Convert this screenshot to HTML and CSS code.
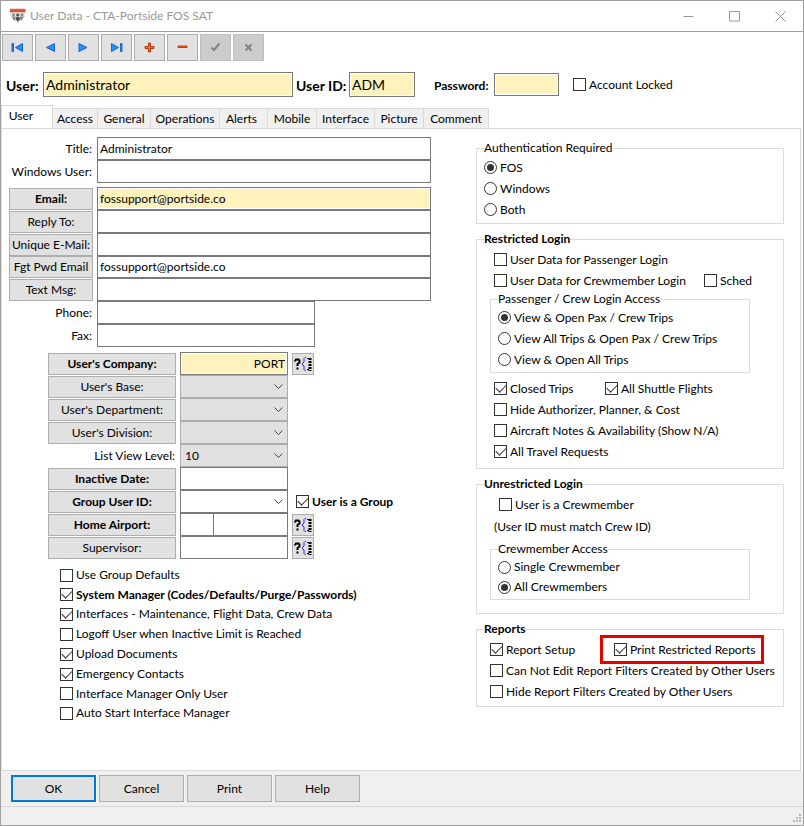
FILE: index.html
```html
<!DOCTYPE html>
<html lang="en">
<head>
<meta charset="utf-8">
<title>User Data - CTA-Portside FOS SAT</title>
<link rel="stylesheet" href="styles.css">
</head>
<body>
<div class="window">
  <header class="titlebar">
    <svg class="app-icon" width="18" height="16" viewBox="0 0 18 16" aria-hidden="true">
      <path d="M1 1h15.500v3.500H1z" fill="#d9532c"/>
      <path d="M1 1h15.500" stroke="#ee8a66" stroke-dasharray="2 1"/>
      <path d="M1.500 4.500h14.500v4.500H1.500z" fill="#e2e2e2"/>
      <g fill="#8a8a8a"><circle cx="4.500" cy="6.800" r="1.500"/><circle cx="13" cy="6.800" r="1.500"/><path d="M2.500 8.500h4v2.500l-1 2-1.500-2z M11 8.500h4l-1.500 2.500-1.500 2-1-2z"/></g>
      <g fill="#505050"><circle cx="8.800" cy="7" r="1.600"/><path d="M6.800 9h4v4l-1-1-.9 3-1-3-1.100 1z"/></g>
    </svg>
    <h1>User Data - CTA-Portside FOS SAT</h1>
    <div class="window-controls">
      <button type="button" aria-label="Minimize"><svg width="11" height="11" viewBox="0 0 11 11"><path d="M.5 5.500h10"/></svg></button>
      <button type="button" aria-label="Maximize"><svg width="11" height="11" viewBox="0 0 11 11"><path d="M1 .5h9.500v9.500H.5V.5z"/></svg></button>
      <button type="button" aria-label="Close"><svg width="11" height="11" viewBox="0 0 11 11"><path d="M.5.5l10 10M10.500.5l-10 10"/></svg></button>
    </div>
  </header>

  <div class="toolbar">
    <button type="button" aria-label="First"><svg class="blue" width="13" height="11" viewBox="0 0 13 11"><path d="M1 1.500h1.500v8H1z M11.500 1.500v8L4.500 5.500z"/></svg></button>
    <button type="button" aria-label="Previous"><svg class="blue" width="13" height="11" viewBox="0 0 13 11"><path d="M10.500 1.500v8L2.500 5.500z"/></svg></button>
    <button type="button" aria-label="Next"><svg class="blue" width="13" height="11" viewBox="0 0 13 11"><path d="M2 1.500v8l8-4z"/></svg></button>
    <button type="button" aria-label="Last"><svg class="blue" width="13" height="11" viewBox="0 0 13 11"><path d="M1.500 1.500v8l7-4z M10.500 1.500H12v8h-1.500z"/></svg></button>
    <button type="button" aria-label="Add"><svg class="orange" width="13" height="11" viewBox="0 0 13 11"><path d="M5.500 1h2v3.500H11v2H7.500V10h-2V6.500H2v-2h3.500z"/></svg></button>
    <button type="button" aria-label="Delete"><svg class="orange" width="13" height="11" viewBox="0 0 13 11"><path d="M2 4h9v1.500H2z"/></svg></button>
    <button type="button" aria-label="Save" disabled><svg class="gray" width="13" height="11" viewBox="0 0 13 11"><path d="M2.500 5.500l2.500 2.500 5.500-6.500"/></svg></button>
    <button type="button" aria-label="Discard" disabled><svg class="gray" width="13" height="11" viewBox="0 0 13 11"><path d="M3.500 2.500l6 6M9.500 2.500l-6 6"/></svg></button>
  </div>

  <div class="identity">
    <label class="big" for="user">User:</label>
    <input class="user required big-input" id="user" type="text" value="Administrator">
    <label class="big" for="userid">User ID:</label>
    <input class="userid required big-input" id="userid" type="text" value="ADM">
    <label class="password-label" for="password">Password:</label>
    <input class="password required" id="password" type="password">
    <label class="check locked"><input type="checkbox">Account Locked</label>
  </div>

  <nav class="tabs">
    <button type="button" class="active">User</button>
    <button type="button">Access</button>
    <button type="button">General</button>
    <button type="button">Operations</button>
    <button type="button" class="alerts">Alerts</button>
    <button type="button">Mobile</button>
    <button type="button">Interface</button>
    <button type="button">Picture</button>
    <button type="button">Comment</button>
  </nav>

  <main class="pane">
    <div class="left">
      <div class="contact">
        <label for="title">Title:</label><input id="title" type="text" value="Administrator">
        <label for="winuser">Windows User:</label><input id="winuser" type="text">
      </div>
      <div class="contact">
        <button type="button" class="strong">Email:</button><input class="required" aria-label="Email" type="text" value="fossupport@portside.co">
        <button type="button">Reply To:</button><input aria-label="Reply To" type="text">
        <button type="button">Unique E-Mail:</button><input aria-label="Unique E-Mail" type="text">
        <button type="button">Fgt Pwd Email</button><input class="tight" aria-label="Forgot Password Email" type="text" value="fossupport@portside.co">
        <button type="button">Text Msg:</button><input aria-label="Text Msg" type="text">
        <label for="phone">Phone:</label><input class="short" id="phone" type="text">
        <label for="fax">Fax:</label><input class="short" id="fax" type="text">
      </div>

      <div class="details">
        <button type="button" class="strong">User's Company:</button>
        <input class="required right-text" aria-label="User's Company" type="text" value="PORT">
        <button type="button" class="lookup" aria-label="Look up company"><svg width="18" height="16" viewBox="0 0 18 16"><use href="#lookup"/></svg></button>

        <button type="button">User's Base:</button>
        <span class="combo off"><select aria-label="User's Base"><option></option></select><svg width="9" height="6" viewBox="0 0 9 6"><path d="M.5.5l4 4 4-4"/></svg></span>
        <span></span>
        <button type="button">User's Department:</button>
        <span class="combo off"><select aria-label="User's Department"><option></option></select><svg width="9" height="6" viewBox="0 0 9 6"><path d="M.5.5l4 4 4-4"/></svg></span>
        <span></span>
        <button type="button">User's Division:</button>
        <span class="combo off"><select aria-label="User's Division"><option></option></select><svg width="9" height="6" viewBox="0 0 9 6"><path d="M.5.5l4 4 4-4"/></svg></span>
        <span></span>
        <label for="level">List View Level:</label>
        <span class="combo off"><select id="level"><option>10</option></select><svg width="9" height="6" viewBox="0 0 9 6"><path d="M.5.5l4 4 4-4"/></svg></span>
        <span></span>
        <button type="button" class="strong">Inactive Date:</button>
        <input aria-label="Inactive Date" type="text">
        <span></span>
        <button type="button" class="strong">Group User ID:</button>
        <span class="combo"><select aria-label="Group User ID"><option></option></select><svg width="9" height="6" viewBox="0 0 9 6"><path d="M.5.5l4 4 4-4"/></svg></span>
        <label class="check strong group"><input type="checkbox" checked>User is a Group</label>
        <button type="button" class="strong">Home Airport:</button>
        <span class="split"><input aria-label="Country" type="text"><input aria-label="Airport" type="text"></span>
        <button type="button" class="lookup" aria-label="Look up airport"><svg width="18" height="16" viewBox="0 0 18 16"><use href="#lookup"/></svg></button>
        <button type="button">Supervisor:</button>
        <input aria-label="Supervisor" type="text">
        <button type="button" class="lookup" aria-label="Look up supervisor"><svg width="18" height="16" viewBox="0 0 18 16"><use href="#lookup"/></svg></button>
      </div>

      <div class="options">
        <label class="check"><input type="checkbox">Use Group Defaults</label>
        <label class="check strong"><input type="checkbox" checked>System Manager (Codes/Defaults/Purge/Passwords)</label>
        <label class="check"><input type="checkbox" checked>Interfaces - Maintenance, Flight Data, Crew Data</label>
        <label class="check"><input type="checkbox">Logoff User when Inactive Limit is Reached</label>
        <label class="check"><input type="checkbox" checked>Upload Documents</label>
        <label class="check"><input type="checkbox" checked>Emergency Contacts</label>
        <label class="check"><input type="checkbox">Interface Manager Only User</label>
        <label class="check"><input type="checkbox">Auto Start Interface Manager</label>
      </div>
    </div>

    <div class="right">
      <fieldset class="auth">
        <legend>Authentication Required</legend>
        <label class="check"><input type="radio" name="auth" checked>FOS</label>
        <label class="check"><input type="radio" name="auth">Windows</label>
        <label class="check"><input type="radio" name="auth">Both</label>
      </fieldset>

      <fieldset class="restricted">
        <legend class="strong">Restricted Login</legend>
        <label class="check"><input type="checkbox">User Data for Passenger Login</label>
        <div class="pair sched">
          <label class="check"><input type="checkbox">User Data for Crewmember Login</label>
          <label class="check"><input type="checkbox">Sched</label>
        </div>
        <fieldset class="inner">
          <legend>Passenger / Crew Login Access</legend>
          <label class="check"><input type="radio" name="pax" checked>View &amp; Open Pax / Crew Trips</label>
          <label class="check"><input type="radio" name="pax">View All Trips &amp; Open Pax / Crew Trips</label>
          <label class="check"><input type="radio" name="pax">View &amp; Open All Trips</label>
        </fieldset>
        <div class="pair shuttle">
          <label class="check"><input type="checkbox" checked>Closed Trips</label>
          <label class="check"><input type="checkbox" checked>All Shuttle Flights</label>
        </div>
        <label class="check"><input type="checkbox">Hide Authorizer, Planner, &amp; Cost</label>
        <label class="check"><input type="checkbox">Aircraft Notes &amp; Availability (Show N/A)</label>
        <label class="check"><input type="checkbox" checked>All Travel Requests</label>
      </fieldset>

      <fieldset class="unrestricted">
        <legend class="strong">Unrestricted Login</legend>
        <label class="check crew"><input type="checkbox">User is a Crewmember</label>
        <p>(User ID must match Crew ID)</p>
        <fieldset class="inner">
          <legend>Crewmember Access</legend>
          <label class="check"><input type="radio" name="crew">Single Crewmember</label>
          <label class="check"><input type="radio" name="crew" checked>All Crewmembers</label>
        </fieldset>
      </fieldset>

      <fieldset class="reports">
        <legend class="strong">Reports</legend>
        <div class="pair print">
          <label class="check"><input type="checkbox" checked>Report Setup</label>
          <label class="check highlight"><input type="checkbox" checked>Print Restricted Reports</label>
        </div>
        <label class="check"><input type="checkbox">Can Not Edit Report Filters Created by Other Users</label>
        <label class="check"><input type="checkbox">Hide Report Filters Created by Other Users</label>
      </fieldset>
    </div>
  </main>

  <div class="actions">
    <button type="button" class="default">OK</button>
    <button type="button">Cancel</button>
    <button type="button">Print</button>
    <button type="button">Help</button>
  </div>
  <footer class="status">
    <svg width="9" height="9" viewBox="0 0 9 9" aria-hidden="true"><path d="M6 0h2v2H6zM3 3h2v2H3zM6 3h2v2H6zM0 6h2v2H0zM3 6h2v2H3zM6 6h2v2H6z"/></svg>
  </footer>
</div>

<svg class="symbols" width="0" height="0" aria-hidden="true">
  <symbol id="lookup" viewBox="0 0 18 16">
    <path d="M1 5.500V5l1-1.500h2.500l1 1v2L3.500 8v2M3.500 11.500v2" fill="none" stroke="#000" stroke-width="2"/>
    <path d="M12 1.500h-1l-1 1V6L8 8l2 2v3.500l1 1h1" fill="none" stroke="#22f"/>
    <path d="M16 2v13" stroke="#000" stroke-width="3" stroke-dasharray="2 1"/>
    <path d="M13 2.500h2M13 13.500h2" stroke="#000" stroke-width="1"/>
  </symbol>
</svg>
</body>
</html>
```
FILE: styles.css
```css
* { box-sizing: border-box; }

body {
  margin: 0;
  font: 12px/16px Lato, "Open Sans", sans-serif;
  color: #000;
  background: #fff;
}

button, input, select {
  margin: 0;
  padding: 0;
  font: inherit;
  color: inherit;
  border-radius: 0;
}

button {
  background: #e1e1e1;
  border: 1px solid #adadad;
  white-space: nowrap;
}

input[type="text"], input[type="password"] {
  width: 100%;
  min-width: 0;
  height: 23px;
  padding: 0 2px 1px;
  background: #fff;
  border: 1px solid #7a7a7a;
  outline: 0;
}

input.required {
  background: #fff2bd;
  box-shadow: inset 0 0 0 1px #fff;
}

button.strong, .strong { font-weight: 700; }
.symbols { position: absolute; }

.window {
  display: flex;
  flex-direction: column;
  min-height: 100vh;
  border: 1px solid #a0a0a0;
}

/* Title bar */
.titlebar {
  display: flex;
  align-items: center;
  height: 31px;
  padding-left: 8px;
  border-bottom: 1px solid #a0a0a0;
}
.titlebar h1 {
  flex: 1;
  margin: 0 0 0 3px;
  font-size: 12px;
  font-weight: 400;
  color: #999;
}
.window-controls { display: flex; }
.window-controls button {
  display: grid;
  place-items: center;
  width: 46px;
  height: 28px;
  background: none;
  border: 0;
}
.window-controls svg { fill: none; stroke: #999; }

/* Record navigation */
.toolbar { display: flex; gap: 2px; padding: 2px 1px 0; }
.toolbar button {
  display: grid;
  place-items: center;
  width: 31px;
  height: 27px;
}
.toolbar button:disabled { background: #ccc; border-color: #bfbfbf; }
.blue { fill: #2f8df5; stroke: #1465cf; stroke-width: 1; }
.orange { fill: #f46a1c; stroke: #c23c08; stroke-width: 1; }
.gray { fill: none; stroke: #838383; stroke-width: 2; }

/* User identity row */
.identity {
  display: flex;
  align-items: center;
  height: 44px;
  padding: 3px 0 0 5px;
}
.identity label { white-space: nowrap; font-weight: 700; }
.identity > label:not(.check) { padding-top: 3px; }
.identity .big { font-size: 14px; flex: 0 0 37px; }
.identity .user + .big { flex-basis: 53px; }
.identity .big-input { height: 25px; font-size: 14px; }
.identity .user { flex: none; width: 250px; margin-right: 3px; }
.identity .userid { flex: none; width: 66px; margin-right: 19px; }
.identity .password-label { flex: 0 0 60px; }
.identity .password { flex: none; width: 65px; margin-right: 14px; }
.identity .locked { font-weight: 400; }

/* Tabs */
.tabs {
  display: grid;
  grid-template-columns: 52px 45px 53px 69px 48px 49px 58px 49px 65px;
  align-items: end;
  height: 23px;
}
.tabs button {
  height: 20px;
  background: #f0f0f0;
  border-color: #dadada;
  border-width: 1px 1px 0 0;
}
.tabs .active {
  height: 24px;
  margin-bottom: -1px;
  padding: 0 12px 3px 0;
  background: #fff;
  border-left-width: 1px;
}
.tabs .alerts { padding-right: 4px; }

/* Tab pane */
.pane {
  flex: 1;
  display: flex;
  padding: 8px 16px 0 7px;
  margin-right: 2px;
  border: 1px solid #dadada;
}
.left { flex: 0 0 422px; }
.right { flex: 1; min-width: 300px; margin: 3px 0 0 45px; }

.contact {
  display: grid;
  grid-template-columns: 84px 1fr;
  column-gap: 4px;
  margin-bottom: 4px;
}
.contact > button { height: 22px; align-self: end; }
.contact > label, .details > label:not(.check) {
  text-align: right;
  line-height: 24px;
  padding-right: 1px;
  white-space: nowrap;
}
.contact > label, .details > label:not(.check) { height: 23px; }
.contact .short { width: 218px; }
.contact .tight { height: 22px; }

.details {
  display: grid;
  grid-template-columns: 128px 108px 22px;
  column-gap: 4px;
  margin: 5px 0 0 39px;
}
.details > button { height: 22px; align-self: end; }
.details .right-text { text-align: right; }
.details .lookup { display: grid; place-items: center; }
.details .group { margin-left: 4px; }

.combo {
  display: grid;
  grid-template-columns: 1fr 14px;
  align-items: center;
  height: 23px;
}
.combo select {
  grid-area: 1 / 1 / 2 / 3;
  width: 100%;
  height: 23px;
  padding: 0 4px;
  appearance: none;
  background: #fff;
  border: 1px solid #7a7a7a;
}
.combo.off select { background: #e1e1e1; border-color: #adadad; }
.combo svg {
  grid-area: 1 / 2;
  justify-self: start;
  fill: none;
  stroke: #444;
  pointer-events: none;
}
.split { display: grid; grid-template-columns: 34px 1fr; }
.split input + input { border-left: 0; }

.options {
  display: grid;
  grid-template-rows: 20px 19px 20px 20px 20px 20px 19px 20px;
  margin: 6px 0 0 51px;
}

/* Check boxes and radio buttons */
.check {
  display: flex;
  align-items: center;
  gap: 3px;
  white-space: nowrap;
}
.check input {
  flex: none;
  display: grid;
  place-items: center;
  width: 13px;
  height: 13px;
  appearance: none;
  background: #fff;
  border: 1px solid #333;
}
.check input[type="checkbox"]:checked::before {
  content: "";
  width: 9px;
  height: 5px;
  margin-top: -3px;
  border: solid #333;
  border-width: 0 0 1px 1px;
  transform: rotate(-45deg);
}
.check input[type="radio"] { border-radius: 50%; }
.check input[type="radio"]:checked::before {
  content: "";
  width: 7px;
  height: 7px;
  border-radius: 50%;
  background: #333;
}

/* Group boxes */
fieldset {
  min-width: 0;
  margin: 0 0 7px;
  padding: 0 0 0 7px;
  border: 1px solid #dcdcdc;
}
fieldset legend { padding: 0; line-height: 16px; }
fieldset .check { height: 21px; }
.auth { padding-top: 1px; padding-bottom: 3px; }
.restricted { padding: 2px 0 6px 17px; }
.restricted > legend, .unrestricted > legend { margin-left: -10px; }
.unrestricted { padding: 2px 0 13px 17px; }
.inner { width: 260px; margin: 0 0 5px -4px; padding-bottom: 2px; }
.unrestricted .inner { margin-bottom: 0; }
.unrestricted .inner .check { height: 20px; }
.unrestricted .crew { margin-left: 5px; }
.unrestricted p { margin: 2px 0 5px; line-height: 19px; }
.reports { padding: 2px 0 4px 13px; }
.reports > legend { margin-left: -6px; }
.pair { display: grid; }
.sched { grid-template-columns: 210px 1fr; }
.shuttle { grid-template-columns: 111px 1fr; }
.print { grid-template-columns: 124px 1fr; }
.print .highlight {
  justify-self: start;
  margin-left: -10px;
  padding: 0 4px 0 10px;
  outline: 3px solid #e60000;
  outline-offset: 1px;
}

/* Dialog buttons and status bar */
.actions {
  display: flex;
  gap: 3px;
  padding: 4px 10px;
  background: #f0f0f0;
  border-bottom: 1px solid #d7d7d7;
}
.actions button { width: 85px; height: 27px; }
.actions .default { border: 2px solid #0078d7; }
.status {
  display: flex;
  justify-content: flex-end;
  align-items: flex-end;
  height: 18px;
  padding: 0 1px 2px;
  background: #f0f0f0;
}
.status svg { fill: #b8b8b8; }
```
